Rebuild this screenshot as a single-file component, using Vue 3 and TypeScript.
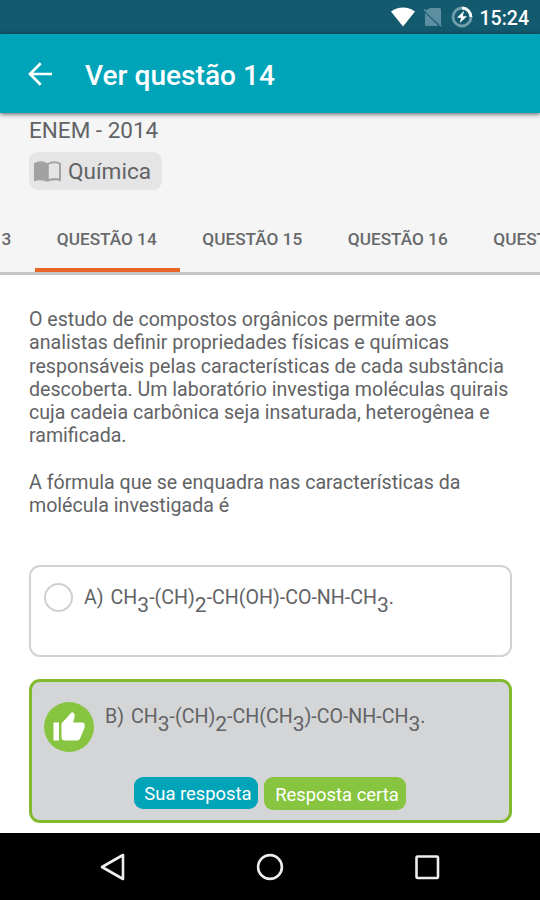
<script setup lang="ts">
interface Token {
  text: string
  sub?: boolean
}

const tabs: string[] = ['QUESTÃO 13', 'QUESTÃO 14', 'QUESTÃO 15', 'QUESTÃO 16', 'QUESTÃO 17']
const activeTab = 'QUESTÃO 14'

const firstParagraph: string[] = [
  'O estudo de compostos orgânicos permite aos',
  'analistas definir propriedades físicas e químicas',
  'responsáveis pelas características de cada substância',
  'descoberta. Um laboratório investiga moléculas quirais',
  'cuja cadeia carbônica seja insaturada, heterogênea e',
  'ramificada.',
]
const secondParagraph: string[] = [
  'A fórmula que se enquadra nas características da',
  'molécula investigada é',
]

// "_n" in a formula marks a subscript digit
function parse(formula: string): Token[] {
  return formula
    .split(/(_\d)/)
    .filter((part) => part.length > 0)
    .map((part) => (part[0] === '_' ? { text: part.slice(1), sub: true } : { text: part }))
}

const optionA = parse('CH_3-(CH)_2-CH(OH)-CO-NH-CH_3.')
const optionB = parse('CH_3-(CH)_2-CH(CH_3)-CO-NH-CH_3.')
</script>

<template>
  <div class="screen">
    <div class="status">
      <svg class="wifi" viewBox="0 0 26 20"><path d="M1 4.6C8-.9 18-.9 25 4.6L13 19.4Z" fill="#fff" /></svg>
      <svg class="sim" viewBox="0 0 20 20">
        <path d="M7 1h9.500q1.500 0 1.500 1.500V18L2.500 3.500ZM2 5.500L15.500 19H3.500Q2 19 2 17.500Z" fill="#5c8fa0" />
        <path d="M1 2.200L18.500 19.300" stroke="#5c8fa0" stroke-width="1.500" />
      </svg>
      <svg class="battery" viewBox="0 0 22 22">
        <circle cx="11" cy="11" r="9" fill="none" stroke="#6f9fad" stroke-width="2.800" />
        <path d="M11 2A9 9 0 0 1 20 11" fill="none" stroke="#fff" stroke-width="2.800" />
        <path d="M13 4.800L6 11.700H10L8.800 17L16 10.200H11.800Z" fill="#fff" />
      </svg>
      <span class="clock">15:24</span>
    </div>

    <header class="appbar">
      <svg class="back" viewBox="0 0 24 24"><path d="M12.700 1.300L2 12L12.700 22.700M2 12H24" fill="none" stroke="#fff" stroke-width="2.700" /></svg>
      <h1>Ver questão 14</h1>
    </header>

    <section class="info">
      <div class="exam">ENEM - 2014</div>
      <div class="subject">
        <svg class="book" viewBox="0 0 27 21">
          <path d="M0 2.200Q7 -1.500 13.500 2.200Q20 -1.500 27 2.200V20.200Q20 17.800 13.500 20.800Q7 17.800 0 20.200Z" fill="#a3a2a3" />
          <path d="M14.800 3.500Q20 1.500 25 3V17.500Q20 16.300 14.800 18Z" fill="#e6e5e6" />
        </svg>
        <span>Química</span>
      </div>
      <nav class="tabs">
        <div v-for="tab in tabs" :key="tab" class="tab" :class="{ active: tab === activeTab }">{{ tab }}</div>
      </nav>
    </section>

    <main class="content">
      <p><span v-for="line in firstParagraph" :key="line" class="line">{{ line }}</span></p>
      <p><span v-for="line in secondParagraph" :key="line" class="line">{{ line }}</span></p>

      <div class="option plain">
        <span class="radio"></span>
        <div class="formula"><span class="letter">A)</span><span v-for="(t, i) in optionA" :key="i" :class="{ sub: t.sub }">{{ t.text }}</span></div>
      </div>

      <div class="option correct">
        <div class="answer">
          <svg class="thumb" viewBox="0 0 50 50">
            <circle cx="25" cy="25" r="25" fill="#87c540" />
            <path d="M9.500 20.500H15V38.500H9.500ZM17.500 21.500L27.500 10.500Q28.200 9.800 29 10.500L30.200 11.800Q31 12.700 30.700 14L29.200 20.500H38Q41 20.500 40.700 23.500V25.500L36.200 36.300Q35.300 38.500 33 38.500H20.500Q17.500 38.500 17.500 35.500Z" fill="#fff" />
          </svg>
          <div class="formula"><span class="letter">B)</span><span v-for="(t, i) in optionB" :key="i" :class="{ sub: t.sub }">{{ t.text }}</span></div>
        </div>
        <div class="badges">
          <span class="badge yours">Sua resposta</span>
          <span class="badge right">Resposta certa</span>
        </div>
      </div>
    </main>

    <footer class="navbar">
      <svg viewBox="0 0 28 28"><path d="M24 2V26L3 14Z" fill="none" stroke="#eee" stroke-width="2.600" stroke-linejoin="round" /></svg>
      <svg viewBox="0 0 28 28"><circle cx="14" cy="14" r="11.900" fill="none" stroke="#eee" stroke-width="2.600" /></svg>
      <svg viewBox="0 0 28 28"><rect x="3.500" y="3.500" width="21.500" height="21.500" rx="1" fill="none" stroke="#eee" stroke-width="2.600" /></svg>
    </footer>
  </div>
</template>

<style>
body {
  margin: 0;
  background: #fff;
}
</style>

<style scoped>
.screen {
  width: 540px;
  height: 900px;
  overflow: hidden;
  display: flex;
  flex-direction: column;
  background: #fff;
  color: #626365;
  font-family: Roboto, 'Liberation Sans', sans-serif;
}
.status {
  height: 34px;
  flex: none;
  box-sizing: border-box;
  padding: 0 11px 0 0;
  display: flex;
  align-items: center;
  justify-content: flex-end;
  background: #145a6f;
  color: #fff;
}
.wifi { width: 26px; height: 20px; margin-right: 7px; }
.sim { width: 20px; height: 20px; margin-right: 8px; }
.battery { width: 22px; height: 22px; margin-right: 7px; }
.clock {
  font-size: 19.5px;
  font-weight: 500;
  line-height: 34px;
  padding-top: 3px;
}
.appbar {
  height: 79px;
  flex: none;
  display: flex;
  align-items: center;
  background: #00a4b8;
  color: #fff;
  position: relative;
  box-shadow: 0 1px 5px rgba(0, 0, 0, 0.65);
}
.back { width: 24px; height: 24px; margin-left: 28px; }
h1 {
  margin: 5px 0 0 33px;
  font-size: 28.1px;
  font-weight: 500;
  line-height: 32px;
}
.info {
  height: 162px;
  flex: none;
  box-sizing: border-box;
  border-bottom: 3px solid #c6c6c6;
  background: #f5f5f5;
  overflow: hidden;
}
.exam {
  margin: 3px 0 0 29px;
  font-size: 22.5px;
  line-height: 28px;
}
.subject {
  width: 133px;
  height: 38px;
  margin: 8px 0 0 29px;
  padding-left: 5px;
  box-sizing: border-box;
  display: flex;
  align-items: center;
  gap: 7px;
  border-radius: 9px;
  background: #e6e5e6;
  font-size: 22.6px;
}
.subject span { padding-top: 1px; }
.book { width: 27px; height: 21px; }
.tabs {
  height: 82px;
  margin-left: -111px;
  display: flex;
}
.tab {
  flex: none;
  width: 145.5px;
  box-sizing: border-box;
  padding-top: 16px;
  text-align: center;
  font-size: 17.2px;
  font-weight: 500;
  line-height: 66px;
  height: 82px;
  text-indent: -1px;
  color: #68696b;
}
.tab.active { border-bottom: 4px solid #e86427; }
.content {
  flex: 1;
  min-height: 0;
  padding: 33px 28px 0 29px;
}
p {
  margin: 0 0 23px;
  font-size: 19.6px;
  line-height: 23.25px;
}
.line { display: block; white-space: nowrap; }
.option {
  box-sizing: border-box;
  border-radius: 11px;
  font-size: 19.6px;
}
.plain {
  height: 92px;
  margin-top: 48px;
  padding: 16px 13px;
  display: flex;
  gap: 11px;
  border: 2px solid #d1d2d2;
}
.radio {
  width: 29px;
  height: 29px;
  box-sizing: border-box;
  border: 2px solid #cfd0d0;
  border-radius: 50%;
}
.formula { line-height: 28px; height: 28px; white-space: nowrap; }
.letter { margin-right: 7px; }
.sub { position: relative; top: 8px; font-size: 21px; }
.correct {
  height: 144px;
  margin-top: 22px;
  padding: 20px 12px;
  border: 3px solid #82ba2f;
  background: #d3d5d6;
}
.answer { display: flex; gap: 11px; }
.thumb { width: 50px; height: 50px; flex: none; }
.badges {
  display: flex;
  gap: 6px;
  margin: 25px 0 0 90px;
}
.badge {
  box-sizing: border-box;
  height: 32px;
  padding-left: 4px;
  border-radius: 9px;
  color: #fff;
  text-align: center;
  font-size: 18.4px;
  line-height: 33px;
  white-space: nowrap;
}
.yours { width: 124px; background: #00a4b8; }
.right { width: 142px; height: 33px; line-height: 35px; background: #87c540; }
.navbar {
  height: 67px;
  flex: none;
  box-sizing: border-box;
  padding: 0 99px;
  display: flex;
  align-items: center;
  justify-content: space-between;
  background: #000;
}
.navbar svg { width: 28px; height: 28px; }
</style>
